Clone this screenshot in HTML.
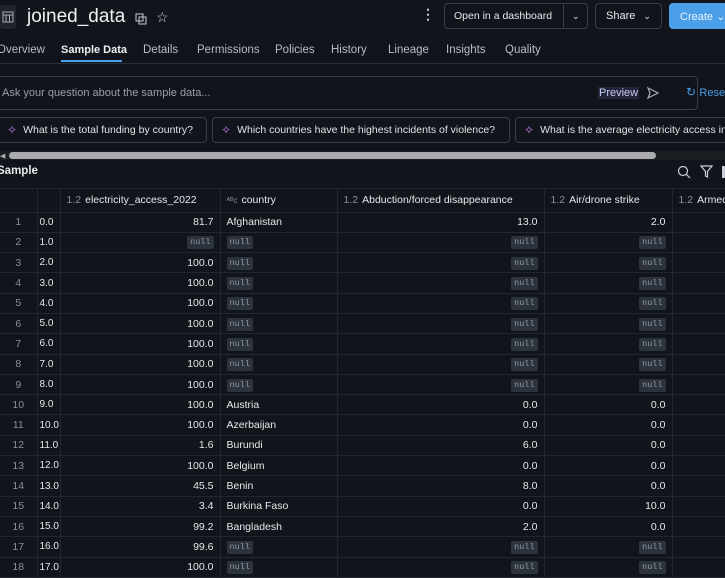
<!DOCTYPE html>
<html><head><style>
*{box-sizing:border-box;margin:0;padding:0}
body{width:725px;height:573px;overflow:hidden;background:#11141a;color:#e6e8eb;font-family:"Liberation Sans",sans-serif;font-size:11px;position:relative}
.abs{position:absolute;white-space:nowrap}
.btn{position:absolute;top:3px;height:26px;border:1px solid #3a3f47;border-radius:4px;font-size:11px;color:#e6e8eb;display:flex;align-items:center;white-space:nowrap;overflow:hidden}
.tab{position:absolute;top:44px;font-size:11.5px;color:#b8bcc4;white-space:nowrap}
.chip{position:absolute;top:117px;height:26px;border:1px solid #3a3f47;border-radius:4px;display:flex;align-items:center;font-size:10.5px;color:#dfe2e6;padding-left:8px;white-space:nowrap;overflow:hidden}
.chip b{color:#c17cf0;font-weight:normal;margin-right:6px;font-size:12px}
table{position:absolute;left:0;top:189px;border-collapse:collapse;table-layout:fixed;width:760px}
td{height:20.3px;border-bottom:1px solid #22262d;border-right:1px solid #22262d;padding:0 6px;white-space:nowrap;overflow:hidden;font-size:10.5px;color:#e6e8eb}
tr.h td{height:23px;font-size:10.5px}
td.n{color:#8a9099;text-align:center;padding:0}
td.r{text-align:right}
td.i{padding:0 2px;font-size:10px}
.nl{display:inline-block;background:#2c333c;color:#8e97a3;font-family:"Liberation Mono",monospace;font-size:8.5px;padding:1px 3px;border-radius:2px;line-height:11px}
.t{color:#8a9099;font-weight:normal;margin-right:4px}
</style></head><body>
<div class="abs" style="left:0;top:5px;width:16px;height:24px;background:#1f232a;border-radius:3px"></div>
<svg class="abs" style="left:2px;top:11px" width="12" height="12" viewBox="0 0 12 12" fill="none" stroke="#aab" stroke-width="1"><rect x="1" y="1" width="10" height="10"/><line x1="1" y1="4" x2="11" y2="4"/><line x1="4" y1="4" x2="4" y2="11"/><line x1="7.5" y1="4" x2="7.5" y2="11"/></svg>
<div class="abs" style="left:27px;top:6px;font-size:19px;color:#eef0f3">joined_data</div>
<svg class="abs" style="left:135px;top:13px" width="12" height="12" viewBox="0 0 12 12" fill="none" stroke="#ccd" stroke-width="1"><rect x="1" y="1" width="7" height="7"/><rect x="4" y="4" width="7" height="7"/></svg>
<div class="abs" style="left:156px;top:9px;font-size:14px;color:#ccd">☆</div>
<div class="abs" style="left:421px;top:6px;font-size:14px;color:#ccd;font-weight:bold">⋮</div>
<div class="btn" style="left:444px;width:144px"><span style="padding-left:9px;width:119px;border-right:1px solid #3a3f47;height:24px;line-height:24px;font-size:10.5px">Open in a dashboard</span><span style="padding-left:8px;font-size:9px">⌄</span></div>
<div class="btn" style="left:595px;width:67px;padding-left:10px">Share <span style="margin-left:8px;font-size:9px">⌄</span></div>
<div class="btn" style="left:669px;width:70px;background:#4a9fe8;border-color:#4a9fe8;padding-left:10px;color:#eaf3fc">Create ⌄</div>
<div class="tab" style="left:-3px">Overview</div>
<div class="tab" style="left:61px;color:#eef0f3;font-weight:bold;font-size:11px">Sample Data</div>
<div class="abs" style="left:61px;top:60px;width:61px;height:2px;background:#4a9fe8"></div>
<div class="tab" style="left:143px">Details</div>
<div class="tab" style="left:197px">Permissions</div>
<div class="tab" style="left:275px">Policies</div>
<div class="tab" style="left:331px">History</div>
<div class="tab" style="left:388px">Lineage</div>
<div class="tab" style="left:446px">Insights</div>
<div class="tab" style="left:505px">Quality</div>
<div class="abs" style="left:0;top:63px;width:725px;height:1px;background:#2a2e35"></div>
<div class="abs" style="left:-5px;top:76px;width:703px;height:34px;border:1px solid #3a3f47;border-radius:4px"></div>
<div class="abs" style="left:2px;top:87px;font-size:11px;color:#9aa0a8">Ask your question about the sample data...</div>
<div class="abs" style="left:598px;top:87px;font-size:11px;color:#c7c9f5;background:#23263a;padding:0 1px">Preview</div>
<svg class="abs" style="left:646px;top:86px" width="14" height="14" viewBox="0 0 14 14" fill="none" stroke="#aab" stroke-width="1.2"><path d="M2 2 L12 7 L2 12 L4 7 Z"/></svg>
<div class="abs" style="left:686px;top:85px;font-size:12px;color:#4a9fe8">↻ <span style="font-size:11px">Reset</span></div>
<div class="chip" style="left:-2px;width:209px"><b>✧</b>What is the total funding by country?</div>
<div class="chip" style="left:212px;width:298px"><b>✧</b>Which countries have the highest incidents of violence?</div>
<div class="chip" style="left:515px;width:220px"><b>✧</b>What is the average electricity access in</div>
<div class="abs" style="left:0;top:151px;width:725px;height:9px;background:#1a1d22"></div>
<div class="abs" style="left:0;top:152px;font-size:7px;color:#aaa">◀</div>
<div class="abs" style="left:9px;top:152px;width:647px;height:7px;background:#a9abae;border-radius:4px"></div>
<div class="abs" style="left:-3px;top:165px;font-size:11.5px;font-weight:bold">Sample</div>
<svg class="abs" style="left:677px;top:165px" width="14" height="14" viewBox="0 0 14 14" fill="none" stroke="#ccd" stroke-width="1.2"><circle cx="6" cy="6" r="4.5"/><line x1="9.5" y1="9.5" x2="13" y2="13"/></svg>
<svg class="abs" style="left:700px;top:165px" width="13" height="13" viewBox="0 0 13 13" fill="none" stroke="#ccd" stroke-width="1.2"><path d="M1 1 H12 L7.5 6.5 V12 L5.5 11 V6.5 Z"/></svg>
<div class="abs" style="left:722px;top:166px;width:3px;height:12px;background:#ccd"></div>
<div class="abs" style="left:0;top:188px;width:725px;height:1px;background:#22262d"></div>
<table>
<colgroup><col style="width:37px"><col style="width:23px"><col style="width:160px"><col style="width:117px"><col style="width:207px"><col style="width:128px"><col style="width:88px"></colgroup>
<tr class="h"><td></td><td></td><td><span class="t">1.2</span>electricity_access_2022</td><td><span class="t" style="font-size:8px">ᴬᴮc</span>country</td><td><span class="t">1.2</span>Abduction/forced disappearance</td><td><span class="t">1.2</span>Air/drone strike</td><td><span class="t">1.2</span>Armed clash</td></tr>
<tr><td class="n">1</td><td class="i">0.0</td><td class="r">81.7</td><td>Afghanistan</td><td class="r">13.0</td><td class="r">2.0</td><td></td></tr>
<tr><td class="n">2</td><td class="i">1.0</td><td class="r"><span class="nl">null</span></td><td><span class="nl">null</span></td><td class="r"><span class="nl">null</span></td><td class="r"><span class="nl">null</span></td><td></td></tr>
<tr><td class="n">3</td><td class="i">2.0</td><td class="r">100.0</td><td><span class="nl">null</span></td><td class="r"><span class="nl">null</span></td><td class="r"><span class="nl">null</span></td><td></td></tr>
<tr><td class="n">4</td><td class="i">3.0</td><td class="r">100.0</td><td><span class="nl">null</span></td><td class="r"><span class="nl">null</span></td><td class="r"><span class="nl">null</span></td><td></td></tr>
<tr><td class="n">5</td><td class="i">4.0</td><td class="r">100.0</td><td><span class="nl">null</span></td><td class="r"><span class="nl">null</span></td><td class="r"><span class="nl">null</span></td><td></td></tr>
<tr><td class="n">6</td><td class="i">5.0</td><td class="r">100.0</td><td><span class="nl">null</span></td><td class="r"><span class="nl">null</span></td><td class="r"><span class="nl">null</span></td><td></td></tr>
<tr><td class="n">7</td><td class="i">6.0</td><td class="r">100.0</td><td><span class="nl">null</span></td><td class="r"><span class="nl">null</span></td><td class="r"><span class="nl">null</span></td><td></td></tr>
<tr><td class="n">8</td><td class="i">7.0</td><td class="r">100.0</td><td><span class="nl">null</span></td><td class="r"><span class="nl">null</span></td><td class="r"><span class="nl">null</span></td><td></td></tr>
<tr><td class="n">9</td><td class="i">8.0</td><td class="r">100.0</td><td><span class="nl">null</span></td><td class="r"><span class="nl">null</span></td><td class="r"><span class="nl">null</span></td><td></td></tr>
<tr><td class="n">10</td><td class="i">9.0</td><td class="r">100.0</td><td>Austria</td><td class="r">0.0</td><td class="r">0.0</td><td></td></tr>
<tr><td class="n">11</td><td class="i">10.0</td><td class="r">100.0</td><td>Azerbaijan</td><td class="r">0.0</td><td class="r">0.0</td><td></td></tr>
<tr><td class="n">12</td><td class="i">11.0</td><td class="r">1.6</td><td>Burundi</td><td class="r">6.0</td><td class="r">0.0</td><td></td></tr>
<tr><td class="n">13</td><td class="i">12.0</td><td class="r">100.0</td><td>Belgium</td><td class="r">0.0</td><td class="r">0.0</td><td></td></tr>
<tr><td class="n">14</td><td class="i">13.0</td><td class="r">45.5</td><td>Benin</td><td class="r">8.0</td><td class="r">0.0</td><td></td></tr>
<tr><td class="n">15</td><td class="i">14.0</td><td class="r">3.4</td><td>Burkina Faso</td><td class="r">0.0</td><td class="r">10.0</td><td></td></tr>
<tr><td class="n">16</td><td class="i">15.0</td><td class="r">99.2</td><td>Bangladesh</td><td class="r">2.0</td><td class="r">0.0</td><td></td></tr>
<tr><td class="n">17</td><td class="i">16.0</td><td class="r">99.6</td><td><span class="nl">null</span></td><td class="r"><span class="nl">null</span></td><td class="r"><span class="nl">null</span></td><td></td></tr>
<tr><td class="n">18</td><td class="i">17.0</td><td class="r">100.0</td><td><span class="nl">null</span></td><td class="r"><span class="nl">null</span></td><td class="r"><span class="nl">null</span></td><td></td></tr>
</table>
</body></html>
